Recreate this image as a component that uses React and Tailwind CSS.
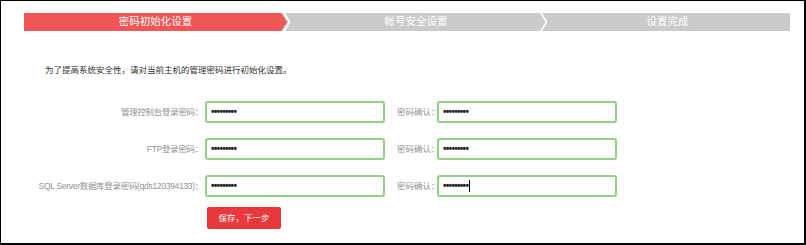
const steps = [
  { label: '密码初始化设置', width: 'w-[263px]', active: true },
  { label: '帐号安全设置', width: 'w-[258px]' },
  { label: '设置完成', width: 'flex-1' },
];

const rows = [
  { label: '管理控制台登录密码：' },
  { label: 'FTP登录密码：' },
  { label: 'SQL Server数据库登录密码(qds120394133)：', caret: true },
];

const Chevron = ({ left }) => (
  <svg className="absolute top-0" style={{ left }} width="8" height="18" viewBox="0 0 8 18">
    <path d="M1 0 L6.5 9 L1 18" fill="none" stroke="#fff" strokeWidth="1.6" />
  </svg>
);

const PasswordBox = ({ caret }) => (
  <div className="w-[180px] h-[22px] border-2 border-[#93cf86] rounded-[3px] bg-white flex items-center pl-[4px]">
    <span className="text-[10px] font-bold leading-none text-[#222] tracking-[-0.7px] font-['Liberation_Sans',sans-serif]">
      •••••••••
    </span>
    {caret && <span className="w-px h-[12px] bg-black ml-[1px]" />}
  </div>
);

export default function App() {
  return (
    <div className="w-[806px] h-[245px] bg-white border-t border-l border-r-2 border-b-2 border-black font-['Liberation_Sans','Noto_Sans_CJK_SC',sans-serif]">
      {/* step bar */}
      <div className="relative ml-[23px] mt-[12px] w-[766px] h-[18px] flex bg-[#cbcbcb]">
        {steps.map((s) => (
          <div
            key={s.label}
            className={`${s.width} h-full flex items-center justify-center text-[10.5px] text-white ${
              s.active ? 'bg-[#f05656] [clip-path:polygon(0_0,calc(100%-6px)_0,100%_50%,calc(100%-6px)_100%,0_100%)]' : ''
            }`}
          >
            {s.label}
          </div>
        ))}
        <Chevron left={259} />
        <Chevron left={516} />
      </div>

      <p className="ml-[44px] mt-[33px] text-[8.5px] leading-[12px] text-[#333]">
        为了提高系统安全性，请对当前主机的管理密码进行初始化设置。
      </p>

      <div className="mt-[25px] flex flex-col gap-[15px]">
        {rows.map((r) => (
          <div key={r.label} className="flex items-center h-[22px]">
            <div className="w-[204px] text-right text-[8.5px] text-[#929292] pr-[2px] tracking-[-0.3px] whitespace-nowrap">
              {r.label}
            </div>
            <PasswordBox />
            <div className="ml-[12px] w-[40px] text-[8.5px] text-[#929292] whitespace-nowrap">密码确认：</div>
            <PasswordBox caret={r.caret} />
          </div>
        ))}
      </div>

      <button className="ml-[206px] mt-[10px] w-[74px] h-[22px] bg-[#e8383b] text-white text-[8.5px] rounded-[2px] flex items-center justify-center">
        保存，下一步
      </button>
    </div>
  );
}
